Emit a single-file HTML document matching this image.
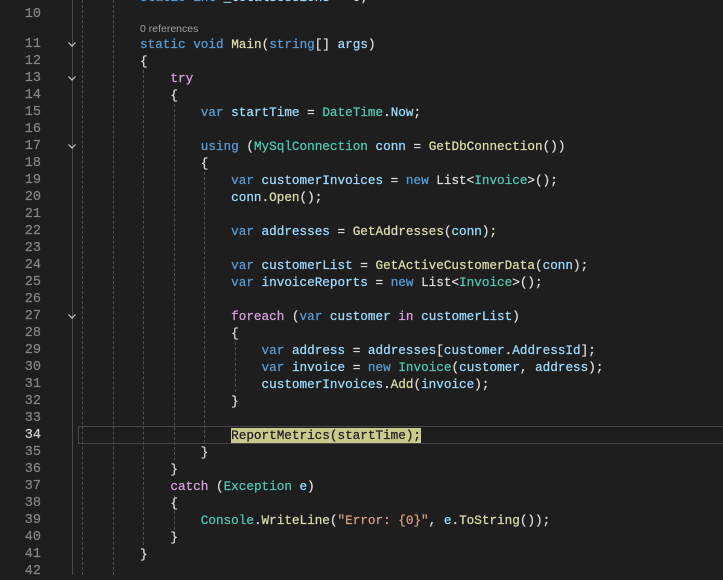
<!DOCTYPE html>
<html><head><meta charset="utf-8"><style>
body{margin:0;width:723px;height:575px;background:#1e1e1e;overflow:hidden;position:relative;font-family:"Liberation Mono",monospace;font-size:12.67px;}
.l{position:absolute;left:140px;height:17px;line-height:17px;white-space:pre;color:#dcdcdc;-webkit-text-stroke:0.25px currentColor;}
.n{position:absolute;left:0;width:41px;text-align:right;height:17px;line-height:17px;color:#858585;font-size:13.5px;-webkit-text-stroke:0.2px currentColor;}
.k{color:#569cd6}.c{color:#d8a0df}.t{color:#4ec9b0}.m{color:#dcdcaa}.v{color:#9cdcfe}.s{color:#d69d85}
.g{position:absolute;width:0;border-left:1px dashed #505050;}
.chev{position:absolute;left:67px;width:10px;height:10px;}
</style></head><body>
<div style="position:absolute;left:72px;top:0;width:1px;height:575px;background:#4a4a4a"></div>
<div class="g" style="left:82px;top:0;height:575px"></div>
<div class="g" style="left:113px;top:0;height:575px"></div>
<div class="g" style="left:143px;top:70px;height:475px"></div>
<div class="g" style="left:174px;top:104px;height:356px"></div>
<div class="g" style="left:174px;top:495px;height:40px"></div>
<div class="g" style="left:204px;top:172px;height:271px"></div>
<div class="g" style="left:235px;top:342px;height:50px"></div>
<div style="position:absolute;left:78px;top:426px;width:650px;height:16px;border:1px solid #464646"></div>
<svg class="chev" style="top:39px" viewBox="0 0 10 10"><path d="M1.5 3.5l3.5 3.5L8.5 3.5" stroke="#c8c8c8" stroke-width="1.2" fill="none"/></svg>
<svg class="chev" style="top:73px" viewBox="0 0 10 10"><path d="M1.5 3.5l3.5 3.5L8.5 3.5" stroke="#c8c8c8" stroke-width="1.2" fill="none"/></svg>
<svg class="chev" style="top:141px" viewBox="0 0 10 10"><path d="M1.5 3.5l3.5 3.5L8.5 3.5" stroke="#c8c8c8" stroke-width="1.2" fill="none"/></svg>
<svg class="chev" style="top:311px" viewBox="0 0 10 10"><path d="M1.5 3.5l3.5 3.5L8.5 3.5" stroke="#c8c8c8" stroke-width="1.2" fill="none"/></svg>

<div class="n" style="top:-11px">9</div>
<div class="l" style="top:-11px"><span class="k">static</span> <span class="k">int</span> <span class="v">_totalSessions</span> = 0;</div>
<div class="n" style="top:6px">10</div>
<div style="position:absolute;left:140px;top:23px;font-family:'Liberation Sans',sans-serif;font-size:10.5px;color:#a0a0a0">0 references</div>
<div class="n" style="top:36px">11</div>
<div class="l" style="top:36px"><span class="k">static</span> <span class="k">void</span> <span class="m">Main</span>(<span class="k">string</span>[] <span class="v">args</span>)</div>
<div class="n" style="top:53px">12</div><div class="l" style="top:53px">{</div>
<div class="n" style="top:70px">13</div><div class="l" style="top:70px">    <span class="c">try</span></div>
<div class="n" style="top:87px">14</div><div class="l" style="top:87px">    {</div>
<div class="n" style="top:104px">15</div><div class="l" style="top:104px">        <span class="k">var</span> <span class="v">startTime</span> = <span class="t">DateTime</span>.<span class="v">Now</span>;</div>
<div class="n" style="top:121px">16</div>
<div class="n" style="top:138px">17</div><div class="l" style="top:138px">        <span class="k">using</span> (<span class="t">MySqlConnection</span> <span class="v">conn</span> = <span class="m">GetDbConnection</span>())</div>
<div class="n" style="top:155px">18</div><div class="l" style="top:155px">        {</div>
<div class="n" style="top:172px">19</div><div class="l" style="top:172px">            <span class="k">var</span> <span class="v">customerInvoices</span> = <span class="k">new</span> List&lt;<span class="t">Invoice</span>&gt;();</div>
<div class="n" style="top:189px">20</div><div class="l" style="top:189px">            <span class="v">conn</span>.<span class="m">Open</span>();</div>
<div class="n" style="top:206px">21</div>
<div class="n" style="top:223px">22</div><div class="l" style="top:223px">            <span class="k">var</span> <span class="v">addresses</span> = <span class="m">GetAddresses</span>(<span class="v">conn</span>);</div>
<div class="n" style="top:240px">23</div>
<div class="n" style="top:257px">24</div><div class="l" style="top:257px">            <span class="k">var</span> <span class="v">customerList</span> = <span class="m">GetActiveCustomerData</span>(<span class="v">conn</span>);</div>
<div class="n" style="top:274px">25</div><div class="l" style="top:274px">            <span class="k">var</span> <span class="v">invoiceReports</span> = <span class="k">new</span> List&lt;<span class="t">Invoice</span>&gt;();</div>
<div class="n" style="top:291px">26</div>
<div class="n" style="top:308px">27</div><div class="l" style="top:308px">            <span class="c">foreach</span> (<span class="k">var</span> <span class="v">customer</span> <span class="c">in</span> <span class="v">customerList</span>)</div>
<div class="n" style="top:325px">28</div><div class="l" style="top:325px">            {</div>
<div class="n" style="top:342px">29</div><div class="l" style="top:342px">                <span class="k">var</span> <span class="v">address</span> = <span class="v">addresses</span>[<span class="v">customer</span>.<span class="v">AddressId</span>];</div>
<div class="n" style="top:359px">30</div><div class="l" style="top:359px">                <span class="k">var</span> <span class="v">invoice</span> = <span class="k">new</span> <span class="t">Invoice</span>(<span class="v">customer</span>, <span class="v">address</span>);</div>
<div class="n" style="top:376px">31</div><div class="l" style="top:376px">                <span class="v">customerInvoices</span>.<span class="m">Add</span>(<span class="v">invoice</span>);</div>
<div class="n" style="top:393px">32</div><div class="l" style="top:393px">            }</div>
<div class="n" style="top:410px">33</div>
<div class="n" style="top:427px;color:#d0d0d0">34</div><div class="l" style="top:427px">            <span style="background:#c8cb8c;color:#1e1e1e">ReportMetrics(startTime);</span></div>
<div class="n" style="top:444px">35</div><div class="l" style="top:444px">        }</div>
<div class="n" style="top:461px">36</div><div class="l" style="top:461px">    }</div>
<div class="n" style="top:478px">37</div><div class="l" style="top:478px">    <span class="c">catch</span> (<span class="t">Exception</span> <span class="v">e</span>)</div>
<div class="n" style="top:495px">38</div><div class="l" style="top:495px">    {</div>
<div class="n" style="top:512px">39</div><div class="l" style="top:512px">        <span class="t">Console</span>.<span class="m">WriteLine</span>(<span class="s">"Error: {0}"</span>, <span class="v">e</span>.<span class="m">ToString</span>());</div>
<div class="n" style="top:529px">40</div><div class="l" style="top:529px">    }</div>
<div class="n" style="top:546px">41</div><div class="l" style="top:546px">}</div>
<div class="n" style="top:563px">42</div>
</body></html>
